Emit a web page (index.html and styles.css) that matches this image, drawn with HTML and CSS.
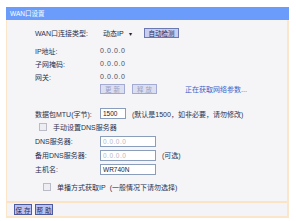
FILE: index.html
```html
<!DOCTYPE html>
<html lang="zh">
<head>
<meta charset="utf-8">
<link rel="stylesheet" href="styles.css">
</head>
<body>
<div class="panel">
  <div class="header">WAN口设置</div>
  <div class="content">
    <div class="row r-type">
      <span class="label">WAN口连接类型:</span>
      <span class="select">动态IP<span class="caret">▾</span></span>
      <span class="btn btn-detect">自动检测</span>
    </div>
    <div class="row r-info first">
      <span class="label">IP地址:</span><span class="val">0.0.0.0</span>
    </div>
    <div class="row r-info">
      <span class="label">子网掩码:</span><span class="val">0.0.0.0</span>
    </div>
    <div class="row r-info">
      <span class="label">网关:</span><span class="val">0.0.0.0</span>
    </div>
    <div class="row r-actions">
      <span class="label"></span>
      <span class="btn btn-dis">更 新</span>
      <span class="btn btn-dis">释 放</span>
      <span class="status">正在获取网络参数...</span>
    </div>
    <div class="row r-mtu">
      <span class="label">数据包MTU(字节):</span>
      <span class="input in-mtu">1500</span>
      <span class="note">(默认是1500，如非必要，请勿修改)</span>
    </div>
    <div class="row r-check">
      <span class="box"></span><span class="check-label">手动设置DNS服务器</span>
    </div>
    <div class="row r-field">
      <span class="label">DNS服务器:</span>
      <span class="input in-ip dim">0.0.0.0</span>
    </div>
    <div class="row r-field">
      <span class="label">备用DNS服务器:</span>
      <span class="input in-ip dim">0.0.0.0</span>
      <span class="note">(可选)</span>
    </div>
    <div class="row r-field">
      <span class="label">主机名:</span>
      <span class="input in-ip">WR740N</span>
    </div>
    <div class="row r-check r-unicast">
      <span class="box"></span><span class="check-label">单播方式获取IP</span><span class="note">(一般情况下请勿选择)</span>
    </div>
  </div>
  <div class="footer">
    <span class="btn btn-foot">保 存</span>
    <span class="btn btn-foot">帮 助</span>
  </div>
</div>
</body>
</html>
```
FILE: styles.css
```css
html, body {
  margin: 0;
  padding: 0;
  background: #ffffff;
}
body {
  font-family: "Liberation Sans", "Noto Sans CJK SC", sans-serif;
  font-size: 7px;
  color: #2a3150;
}
.panel {
  margin: 7px 0 0 6px;
  width: 280px;
  border: 2px solid #fce6c9;
  border-top: none;
  border-left-width: 1px;
  background: #f5f5f7;
}
.header {
  height: 13px;
  line-height: 13px;
  background: #6b9cfb;
  color: #ffffff;
  padding-left: 4px;
  font-size: 6.5px;
  margin-right: -2px;
  margin-left: -1px;
}
.content {
  padding: 6px 0 7px 28px;
  border-bottom: 2px solid #fbe3c4;
}
.row {
  display: flex;
  align-items: center;
  white-space: nowrap;
}
.label {
  width: 65px;
  flex: none;
}
.r-type { height: 14px; }
.r-info { height: 13px; }
.r-info.first { margin-top: 4px; }
.val { color: #4a4f60; letter-spacing: 0.6px; }
.select {
  display: inline-flex;
  align-items: center;
  width: 34px;
  height: 10px;
  padding-left: 3px;
  color: #222;
}
.caret { margin-left: 5px; font-size: 6px; }
.btn {
  display: inline-flex;
  align-items: center;
  justify-content: center;
  height: 8px;
  border: 1px solid #6c78b0;
  background: #c9cdf0;
  color: #1f2a60;
  font-size: 6.5px;
}
.btn-detect { width: 33px; margin-left: 7px; }
.r-actions { height: 12px; }
.btn-dis {
  width: 23px;
  margin-right: 7px;
  color: #9aa0c0;
  background: #dcdff2;
  border-color: #a3abd3;
}
.status { color: #3a62c8; margin-left: 21px; }
.r-mtu { height: 13px; margin-top: 12px; }
.input {
  display: inline-flex;
  align-items: center;
  height: 9px;
  border: 1px solid #8a9dbb;
  background: #ffffff;
  padding-left: 2px;
  color: #222;
  font-size: 6.5px;
}
.in-mtu { width: 22px; }
.in-ip { width: 52px; }
.dim { color: #b7bac4; letter-spacing: 0.5px; }
.note { margin-left: 6px; color: #2a3150; }
.r-check { height: 14px; padding-left: 4px; }
.box {
  width: 6px;
  height: 6px;
  border: 1px solid #b9bcc6;
  background: #eeeef2;
  margin-right: 6px;
}
.r-field { height: 14px; }
.r-unicast { margin-top: 4px; padding-left: 8px; }
.r-unicast .note { margin-left: 4px; }
.footer {
  height: 13px;
  display: flex;
  align-items: center;
  gap: 3px;
  padding-left: 7px;
  background: #f4f4f8;
}
.btn-foot {
  width: 16px;
  height: 9px;
  background: #bcc2ef;
  border-color: #4d5ba0;
  color: #1f2a60;
}
```
